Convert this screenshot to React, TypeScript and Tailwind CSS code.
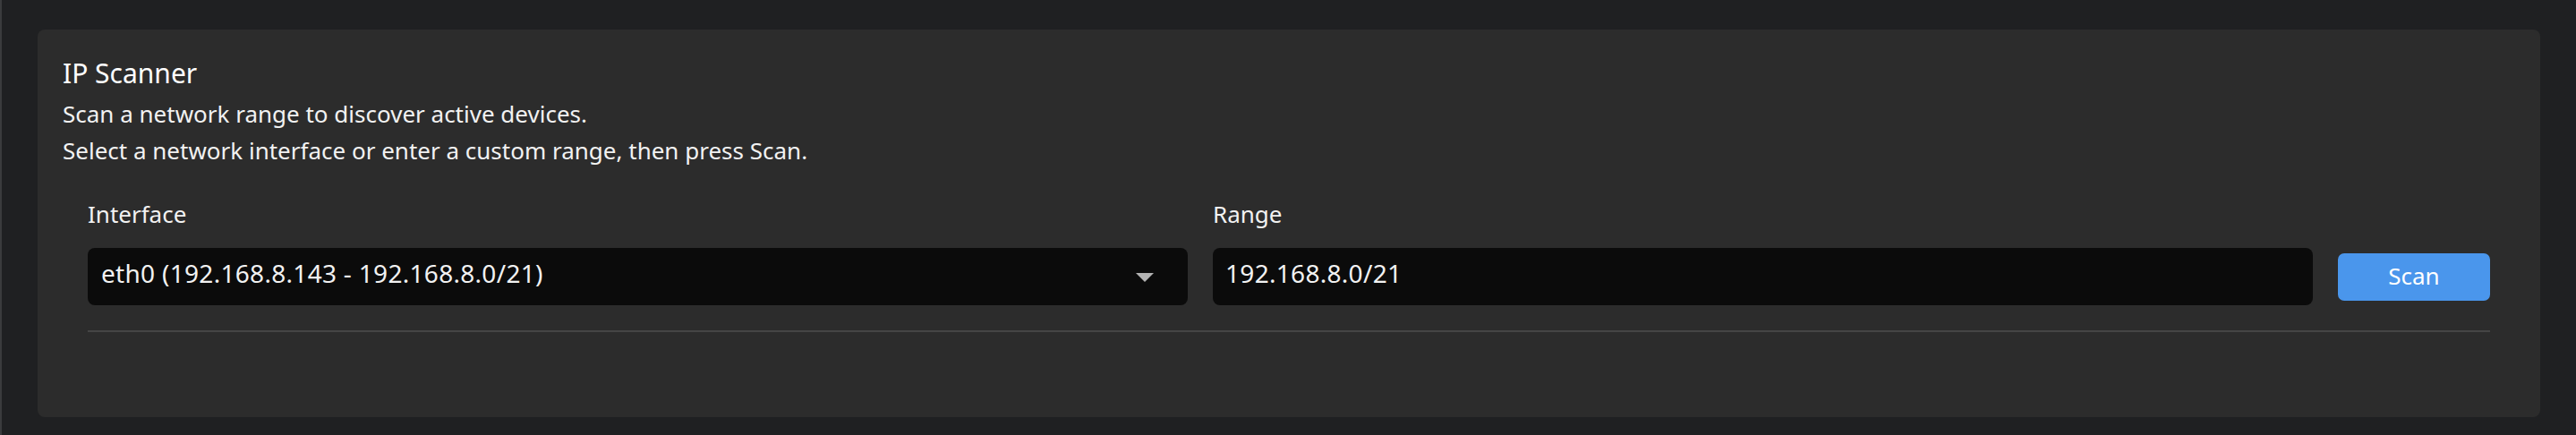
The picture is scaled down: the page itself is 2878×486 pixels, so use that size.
import React from "react";

const font = { fontFamily: "'Noto Sans', 'Open Sans', sans-serif" };

export default function App() {
  return (
    <div
      className="flex w-full h-[486px] bg-[#1f2022] text-[#f2f2f2]"
      style={font}
    >
      <div className="w-[2px] h-full bg-[#3a3b3d]" />
      <div className="flex-1 px-[40px] pt-[33px]">
        <div className="h-[433px] rounded-[8px] bg-[#2c2c2c] px-[28px] pt-[29px]">
          <h1 className="text-[30px] leading-[40px] font-normal text-white">IP Scanner</h1>
          <div className="mt-[5px] text-[26px] leading-[41px]">
            <p>Scan a network range to discover active devices.</p>
            <p>Select a network interface or enter a custom range, then press Scan.</p>
          </div>

          <div className="mt-[30px] px-[28px]">
            <div className="grid grid-cols-[1fr_1fr_170px] gap-x-[28px] gap-y-[18px] items-center">
              <label className="text-[26px] leading-[40px]">Interface</label>
              <label className="text-[26px] leading-[40px]">Range</label>
              <div />

              <div className="relative flex items-center h-[64px] rounded-[8px] bg-[#0b0b0b] pl-[15px] pb-[8px]">
                <span className="text-[28px] leading-[28px] tracking-[0.3px] whitespace-nowrap">
                  eth0 (192.168.8.143 - 192.168.8.0/21)
                </span>
                <svg
                  className="absolute right-[38px] top-[28px]"
                  width="20"
                  height="10"
                  viewBox="0 0 20 10"
                >
                  <path d="M0 0 L20 0 L10 10 Z" fill="#b3b3b3" />
                </svg>
              </div>

              <div className="flex items-center h-[64px] rounded-[8px] bg-[#0b0b0b] pl-[14px] pb-[8px]">
                <span className="text-[28px] leading-[28px] tracking-[0.3px] whitespace-nowrap">
                  192.168.8.0/21
                </span>
              </div>

              <button className="flex items-center justify-center h-[53px] rounded-[7px] bg-[#4a96ec] text-white text-[26px] leading-[30px] pb-[3px]">
                Scan
              </button>
            </div>
            <div className="mt-[28px] h-[2px] bg-[#454545]" />
          </div>
        </div>
      </div>
    </div>
  );
}
